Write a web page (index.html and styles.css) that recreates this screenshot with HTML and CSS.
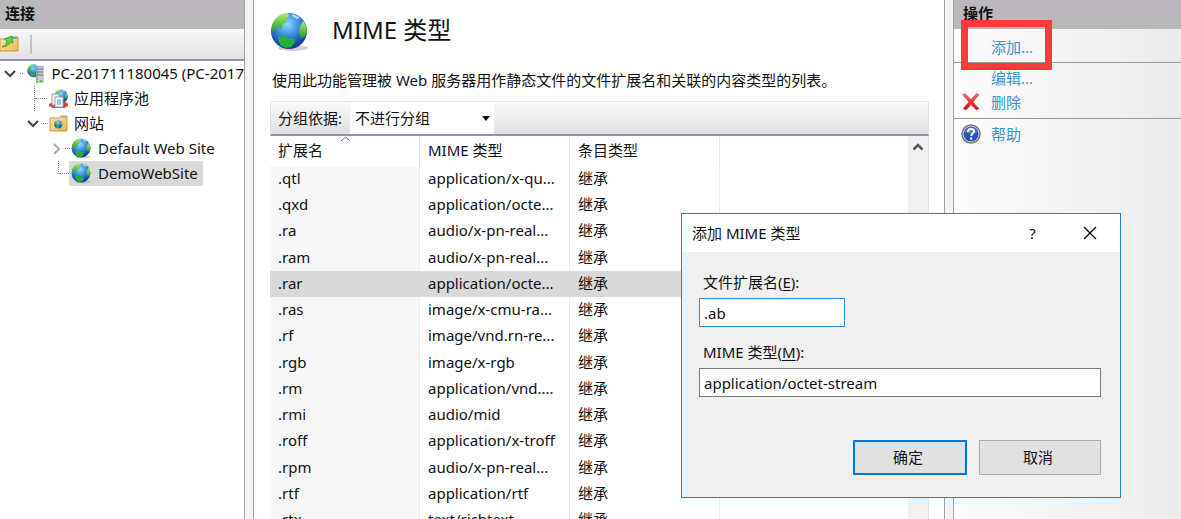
FILE: index.html
```html
<!DOCTYPE html>
<html lang="zh-CN">
<head>
<meta charset="utf-8">
<title>MIME 类型</title>
<link rel="stylesheet" href="styles.css">
</head>
<body>
<svg class="defs" aria-hidden="true">
  <defs>
    <radialGradient id="sea" cx="45%" cy="30%" r="75%">
      <stop offset="0" stop-color="#8fdcff"/><stop offset=".4" stop-color="#3f95e0"/><stop offset=".8" stop-color="#1d45ad"/><stop offset="1" stop-color="#173089"/>
    </radialGradient>
    <linearGradient id="land" x1="0" y1="0" x2="0" y2="1">
      <stop offset="0" stop-color="#b4ee6a"/><stop offset="1" stop-color="#1e9a2c"/>
    </linearGradient>
    <linearGradient id="folder" x1="0" y1="0" x2="1" y2="1">
      <stop offset="0" stop-color="#ffeeb0"/><stop offset="1" stop-color="#e6b450"/>
    </linearGradient>
    <linearGradient id="cross" x1="0" y1="0" x2="0" y2="1">
      <stop offset="0" stop-color="#f66"/><stop offset="1" stop-color="#d00d0d"/>
    </linearGradient>
    <symbol id="globe" viewBox="0 0 40 40">
      <ellipse cx="23" cy="36" rx="15" ry="3" fill="#999" opacity=".45"/>
      <circle cx="19" cy="19" r="18" fill="url(#sea)"/>
      <path d="M2 14C5 6 11 1 18 1l1 3-3 2 1 4-5 2-1 5-4-2-2 3-3 2z" fill="url(#land)"/>
      <path d="M33 9c3 3 4 7 4 11l-2 5-4 1-2-5 1-6z" fill="url(#land)"/>
      <path d="M8 25l5-2 5 3 6 1 1 3-4 5-5 1-5-2-2-4z" fill="#25b03a"/>
      <path d="M22 2c4 1 6 2 8 4l-3 1-5-3z" fill="#d5f5ff" opacity=".7"/>
    </symbol>
  </defs>
</svg>
<div class="app">
  <aside class="panel connections">
    <h2 class="panel-title">连接</h2>
    <div class="toolbar">
      <button class="tool" type="button" aria-label="连接">
        <svg width="19" height="20" viewBox="0 0 19 20"><path d="M0 5h9l2-2h7v14H0z" fill="url(#folder)" stroke="#c99a3c"/><path d="M13 4h4" stroke="#58a8e8" stroke-width="2"/><path d="M2 13c3-1 4-3 5-6L4 5l8-3 1 7-2-1c-2 3-5 5-9 5z" fill="#5fd043" stroke="#34991f" stroke-width=".8"/></svg>
      </button>
      <span class="tool-sep"></span>
    </div>
    <ul class="tree">
      <li class="node root">
        <svg class="chev" width="12" height="12" viewBox="0 0 12 12"><path d="M1 3l5 5 5-5" fill="none" stroke="#444" stroke-width="2"/></svg>
        <span class="stub"></span>
        <svg width="20" height="20" viewBox="0 0 20 20"><use href="#globe" x="1" y="0" width="14" height="14"/><path d="M10 3l2-1h6v16l-2 1h-6z" fill="#9eabb5"/><path d="M12 3h6v16h-6z" fill="#c5cdd4"/><path d="M11 5h6M11 8h6M11 11h6" stroke="#637480"/><circle cx="15" cy="17" r="1.300" fill="#4fd21c"/></svg>
        <span class="label">PC-201711180045 (PC-2017</span>
      </li>
      <li class="node pools">
        <span class="stub long"></span>
        <svg width="20" height="20" viewBox="0 0 20 20"><use href="#globe" x="5" y="0" width="15" height="15"/><path d="M0 15l4-2h12l3 2v2l-4 2H4l-4-2z" fill="#d8413a"/><path d="M3 5h7v11H3z" fill="#eef0f2" stroke="#9aa2a9"/><path d="M6 8h8v10H6z" fill="#fff" stroke="#9aa2a9"/><path d="M8 11h4M8 13h4M8 15h4" stroke="#4d86cc"/></svg>
        <span class="label">应用程序池</span>
      </li>
      <li class="node sites">
        <svg class="chev" width="12" height="12" viewBox="0 0 12 12"><path d="M1 3l5 5 5-5" fill="none" stroke="#444" stroke-width="2"/></svg>
        <span class="stub"></span>
        <svg width="20" height="20" viewBox="0 0 20 20"><path d="M1 4h9l2-2h6v15H1z" fill="url(#folder)" stroke="#c99a3c"/><path d="M13 3h4" stroke="#58a8e8"/><use href="#globe" x="5" y="6" width="9" height="9"/></svg>
        <span class="label">网站</span>
      </li>
      <li class="node site">
        <svg class="chev" width="12" height="12" viewBox="0 0 12 12"><path d="M3 1l5 5-5 5" fill="none" stroke="#aaa" stroke-width="2"/></svg>
        <span class="stub"></span>
        <span class="site-name"><svg width="21" height="21"><use href="#globe"/></svg><span class="label">Default Web Site</span></span>
      </li>
      <li class="node demo">
        <span class="stub long"></span>
        <span class="site-name selected"><svg width="21" height="21"><use href="#globe"/></svg><span class="label">DemoWebSite</span></span>
      </li>
    </ul>
  </aside>
  <div class="splitter"></div>
  <main class="content">
    <header class="heading">
      <svg width="40" height="40"><use href="#globe"/></svg>
      <h1>MIME 类型</h1>
    </header>
    <p class="intro">使用此功能管理被 Web 服务器用作静态文件的文件扩展名和关联的内容类型的列表。</p>
    <section class="list">
      <div class="group-bar">
        <label for="group">分组依据:</label>
        <div class="select-wrap">
          <select id="group"><option>不进行分组</option></select>
          <svg class="caret" width="8" height="5" viewBox="0 0 8 5"><path d="M0 0h8L4 5z" fill="#111"/></svg>
        </div>
      </div>
      <div class="list-body">
        <table>
          <thead><tr><th class="sorted">扩展名<svg class="sort" width="11" height="6" viewBox="0 0 11 6"><path d="M1 5l4.500-4 4.500 4" fill="none" stroke="#777"/></svg></th><th>MIME 类型</th><th>条目类型</th><th></th></tr></thead>
          <tbody>
            <tr><td>.qtl</td><td>application/x-qu...</td><td>继承</td><td></td></tr>
            <tr><td>.qxd</td><td>application/octe...</td><td>继承</td><td></td></tr>
            <tr><td>.ra</td><td>audio/x-pn-real...</td><td>继承</td><td></td></tr>
            <tr><td>.ram</td><td>audio/x-pn-real...</td><td>继承</td><td></td></tr>
            <tr class="current"><td>.rar</td><td>application/octe...</td><td>继承</td><td></td></tr>
            <tr><td>.ras</td><td>image/x-cmu-ra...</td><td>继承</td><td></td></tr>
            <tr><td>.rf</td><td>image/vnd.rn-re...</td><td>继承</td><td></td></tr>
            <tr><td>.rgb</td><td>image/x-rgb</td><td>继承</td><td></td></tr>
            <tr><td>.rm</td><td>application/vnd....</td><td>继承</td><td></td></tr>
            <tr><td>.rmi</td><td>audio/mid</td><td>继承</td><td></td></tr>
            <tr><td>.roff</td><td>application/x-troff</td><td>继承</td><td></td></tr>
            <tr><td>.rpm</td><td>audio/x-pn-real...</td><td>继承</td><td></td></tr>
            <tr><td>.rtf</td><td>application/rtf</td><td>继承</td><td></td></tr>
            <tr><td>.rtx</td><td>text/richtext</td><td>继承</td><td></td></tr>
          </tbody>
        </table>
        <div class="scrollbar">
          <svg width="12" height="12" viewBox="0 0 12 12"><path d="M1.500 8.500L6 4l4.500 4.500" fill="none" stroke="#555" stroke-width="2.500"/></svg>
          <svg width="12" height="12" viewBox="0 0 12 12"><path d="M1.500 3.500L6 8l4.500-4.500" fill="none" stroke="#999" stroke-width="2"/></svg>
        </div>
      </div>
    </section>
  </main>
  <div class="splitter"></div>
  <aside class="panel actions">
    <h2 class="panel-title">操作</h2>
    <nav class="action-list">
      <a class="action add" href="#add">添加...</a>
      <a class="action edit" href="#edit">编辑...</a>
      <a class="action remove" href="#remove"><svg width="20" height="20" viewBox="0 0 20 20"><path d="M1.500 3L4 1.500c2 2 4 4 6 6 2-2.500 4-4.500 6-6L18 3c-2 2-4 4.300-6 7 2 2.500 4 4.700 6 6.500L15.500 18c-2-1.700-4-3.700-5.500-5.500C8.300 14.500 6.500 16.500 5 18l-3-1.500c2-2 4-4.200 5.800-6.500C6 7.500 4 5.200 1.500 3z" fill="url(#cross)" stroke="#b55" stroke-width=".6"/></svg>删除</a>
      <a class="action help" href="#help"><svg width="20" height="20" viewBox="0 0 20 20"><circle cx="10" cy="10" r="9" fill="#e2e4e8" stroke="#777" stroke-width="1.500"/><circle cx="10" cy="10" r="7.500" fill="#2750b8"/><path d="M3.500 8a6.800 6.800 0 0 1 13 0c-4 2-9 2-13 0z" fill="#6f93e0" opacity=".6"/><path d="M7 8c0-4 6-4 6-.8 0 2.300-2.800 2.300-2.800 4.800" fill="none" stroke="#fff" stroke-width="2"/><circle cx="10.200" cy="14.500" r="1.200" fill="#fff"/></svg>帮助</a>
    </nav>
  </aside>
  <div class="marker"></div>
  <form class="dialog" role="dialog" aria-labelledby="dialog-title">
    <div class="dialog-bar">
      <h2 id="dialog-title">添加 MIME 类型</h2>
      <button class="bar-button" type="button">?</button>
      <button class="bar-button" type="button" aria-label="关闭"><svg width="14" height="14" viewBox="0 0 14 14"><path d="M1 1l12 12M13 1L1 13" stroke="#000" stroke-width="1.200"/></svg></button>
    </div>
    <div class="dialog-body">
      <label for="ext">文件扩展名(<u>E</u>):</label>
      <input id="ext" class="short" type="text" value=".ab">
      <label for="mime">MIME 类型(<u>M</u>):</label>
      <input id="mime" type="text" value="application/octet-stream">
      <div class="buttons">
        <button class="ok" type="submit">确定</button>
        <button class="cancel" type="button">取消</button>
      </div>
    </div>
  </form>
</div>
</body>
</html>
```
FILE: styles.css
```css
* { box-sizing: border-box; }
body {
  margin: 0;
  font: 15px/20px "Noto Sans", "Noto Sans CJK SC", sans-serif;
  color: #111;
  background: #fff;
}
h1, h2, p, ul { margin: 0; padding: 0; font-weight: 400; }
button, input, select { font: inherit; color: inherit; margin: 0; }
svg { flex: none; display: block; }
.defs { position: absolute; width: 0; height: 0; }
.app {
  position: relative;
  display: grid;
  grid-template-columns: 244px 10px minmax(0, 1fr) 10px 227px;
  height: 100vh;
  overflow: hidden;
}
.panel { min-width: 0; overflow: hidden; }
.panel-title {
  height: 29px;
  padding: 3px 5px;
  font-size: 15px;
  font-weight: 700;
  background: #bbb8bb;
}
.splitter { background: #f3f3f3; border: solid #a0a0a0; border-width: 0 1px; }

.toolbar {
  display: flex;
  align-items: center;
  height: 32px;
  background: linear-gradient(#f8f8f8, #e3e1e3);
  border-bottom: 2px solid #9491aa;
}
.tool { padding: 0; border: 0; background: none; }
.tool-sep { width: 2px; height: 19px; margin-left: 11px; background: #c5c5b9; }
.tree { list-style: none; }
.node { display: flex; align-items: center; height: 25px; white-space: nowrap; }
.label { margin-left: 5px; padding-bottom: 2px; }
.stub { width: 5px; margin: 0 1px 0 4px; border-top: 1px dotted #888; }
.stub.long { width: 12px; margin: 0 2px 0 0; }
.root { padding-left: 4px; }
.root .stub { margin-right: 3px; }
.root .label { margin-left: 6px; }
.pools { padding-left: 34px; }
.pools::before, .demo::before { content: ""; height: 25px; border-left: 1px dotted #888; }
.demo::before { height: 13px; align-self: flex-start; }
.sites { padding-left: 27px; }
.site { padding-left: 51px; }
.demo { padding-left: 58px; }
.demo .stub.long { width: 10px; margin: 0; }
.site-name { display: flex; align-items: center; height: 25px; padding: 0 5px 0 2px; }
.site-name .label { margin-left: 6px; }
.site .stub { margin: 0 0 0 2px; }
.site .site-name { padding-left: 1px; }
.selected { background: #d9d9d9; }

.content { display: flex; flex-direction: column; min-width: 0; padding: 12px 15px 0 16px; }
.heading { display: flex; align-items: center; gap: 22px; height: 40px; }
.heading h1 { padding-bottom: 4px; font-size: 24px; line-height: 36px; }
.intro { margin: 18px 0 11px 2px; white-space: nowrap; }
.list { flex: 1; min-height: 0; display: flex; flex-direction: column; }
.group-bar {
  flex: none;
  display: flex;
  align-items: center;
  height: 35px;
  padding-left: 7px;
  background: linear-gradient(#fafafa, #e1dfe1);
  border: 1px solid #e2e2e2;
  border-bottom: 2px solid #9491aa;
}
.group-bar label { width: 72px; white-space: nowrap; }
.select-wrap { position: relative; width: 144px; height: 32px; }
.select-wrap select {
  appearance: none;
  width: 100%;
  height: 100%;
  padding: 0 5px;
  border: 0;
  background: #fff;
}
.caret { position: absolute; right: 4px; top: 14px; pointer-events: none; }
.list-body { flex: 1; min-height: 0; display: flex; overflow: hidden; border-right: 1px solid #e2e2e2; }
table { flex: 1; align-self: flex-start; border-collapse: separate; border-spacing: 0; table-layout: fixed; width: 100%; }
th, td { height: 26px; padding: 0 8px 2px; text-align: left; font-weight: 400; white-space: nowrap; border-right: 1px solid #e6edf5; }
th { position: relative; height: 30px; width: 150px; border-color: #e5e5e5; }
th:last-child { width: auto; }
th:last-child, td:last-child { border-right: 0; }
.sort { position: absolute; right: 68px; top: 0; }
tbody tr:nth-child(4n) td { height: 27px; }
td:first-child { background: #f7f7f7; }
.current td, .current td:first-child { background: #d9d9d9; border-color: #d9d9d9; }
.scrollbar {
  flex: none;
  display: flex;
  flex-direction: column;
  justify-content: space-between;
  align-items: center;
  width: 20px;
  padding: 5px 0 0;
  background: #f0f0f0;
}
.scrollbar svg:last-child { margin-bottom: -8px; }

.actions { background: linear-gradient(90deg, #fcfcfc, #ebebeb); }
.actions .panel-title { padding-left: 9px; }
.action-list { display: flex; flex-direction: column; }
.action {
  display: flex;
  align-items: center;
  gap: 10px;
  height: 25px;
  padding-left: 37px;
  color: #3a94cf;
  text-decoration: none;
}
.add { height: 34px; padding-top: 2px; border-bottom: 1px solid #999; }
.edit { margin-top: 2px; }
.remove { height: 29px; padding: 0 0 4px 7px; border-bottom: 1px solid #999; }
.help { height: 30px; padding-left: 7px; }
.marker { position: absolute; right: 129px; top: 20px; width: 91px; height: 50px; border: 7px solid #fb3a3a; pointer-events: none; }

.dialog {
  position: absolute;
  right: 60px;
  top: 213px;
  width: 440px;
  background: #f0f0f0;
  border: 1px solid #1883d7;
}
.dialog-bar { display: flex; align-items: center; height: 38px; padding-left: 10px; background: #fff; }
.dialog-bar h2 { flex: 1; font-size: 15px; }
.bar-button { display: grid; place-items: center; width: 57px; height: 38px; padding: 0; border: 0; background: none; }
.bar-button:last-child { margin-right: 2px; }
.dialog-body { display: flex; flex-direction: column; padding: 20px 19px 22px 17px; }
.dialog-body label { margin-left: 4px; }
.dialog-body u { text-underline-offset: 2px; }
.dialog-body input {
  height: 29px;
  margin: 6px 0 15px;
  padding: 0 4px;
  background: #fff;
  border: 1px solid #7a7a7a;
  outline: 0;
}
.dialog-body .short { width: 146px; border: 1px solid #2e8be0; }
.buttons { display: flex; justify-content: flex-end; gap: 12px; margin-top: 28px; }
.buttons button { width: 122px; height: 35px; padding: 0 4px 2px 0; background: #e1e1e1; border: 1px solid #adadad; }
.buttons .ok { width: 114px; border: 2px solid #0078d7; }
```
